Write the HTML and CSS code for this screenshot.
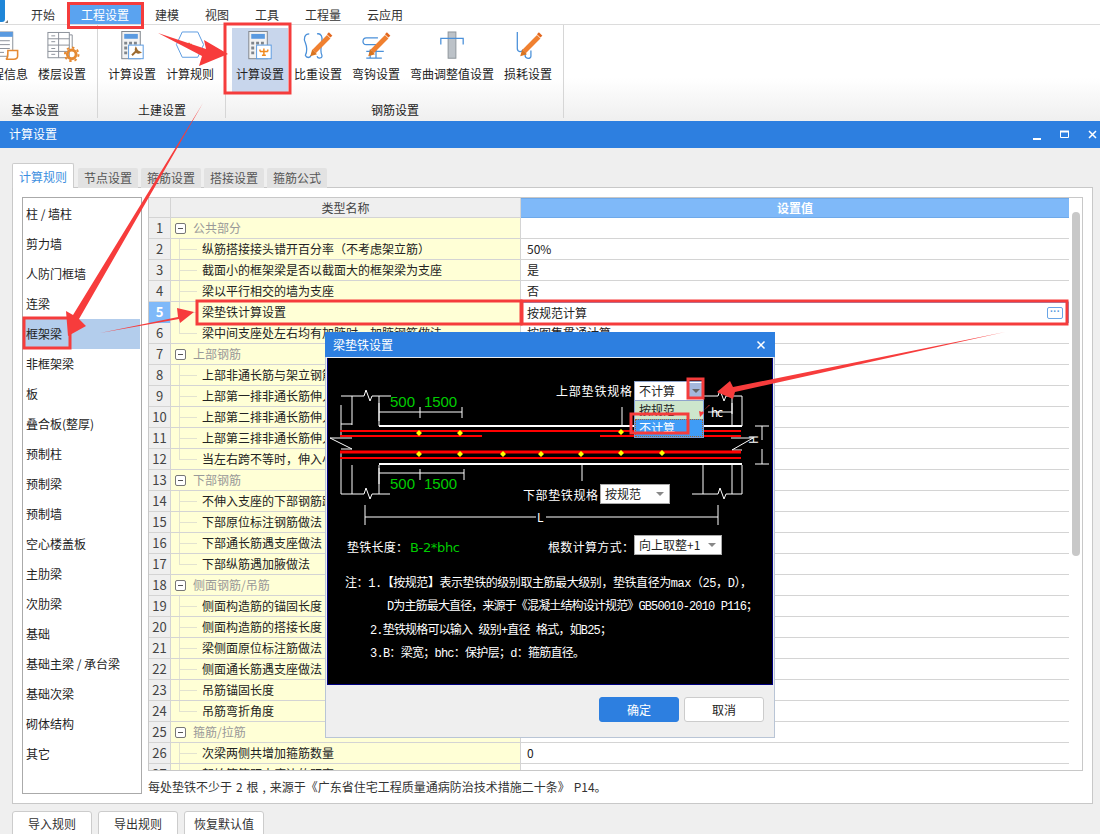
FILE: index.html
```html
<!DOCTYPE html>
<html lang="zh-CN">
<head>
<meta charset="utf-8">
<title>计算设置</title>
<link rel="stylesheet" href="styles.css">
</head>
<body>
<div class="app">
  <nav class="tabbar">
    <div class="logo"><svg width="18" height="24" viewBox="0 0 18 24"><rect x="-4" y="-2" width="9" height="24" rx="3" fill="#1f86d8"/><rect x="5" y="0" width="7" height="24" fill="#fff"/><path d="M5 23l3-3v3z" fill="#777"/></svg></div>
    <span class="tab">开始</span>
    <span class="tab tab-on">工程设置</span>
    <span class="tab">建模</span>
    <span class="tab">视图</span>
    <span class="tab">工具</span>
    <span class="tab">工程量</span>
    <span class="tab">云应用</span>
  </nav>
  <section class="ribbon">
    <div class="group g1">
      <div class="items items-cut">
        <div class="item"><svg class="ico" viewBox="0 0 36 36"><rect x="5" y="1" width="22" height="25" fill="#fff" stroke="#8a9099"/><rect x="5" y="1" width="22" height="5" fill="#5a9ae0"/><path d="M8 10h16M8 14h16M8 18h16M8 22h10" stroke="#8a9099"/><path d="M22 20h10v6c0 3-3 3-4 3h-8c2-1 2-3 2-9z" fill="#fff" stroke="#e58a33" stroke-width="1.6"/></svg><span>工程信息</span></div>
        <div class="item"><svg class="ico" viewBox="0 0 36 36"><rect x="3.500" y="1.500" width="22" height="26" fill="#fff" stroke="#8a9099"/><path d="M3.500 8h22M3.500 14.500h22M3.500 21h22M14.500 1.500v26M7 5h4M7 11h4M7 18h4M7 24h4" stroke="#8a9099"/><path d="M25.500 4h3v13" fill="none" stroke="#8a9099"/><circle cx="28" cy="24" r="4.500" fill="none" stroke="#e58a33" stroke-width="3"/><circle cx="28" cy="24" r="7" fill="none" stroke="#e58a33" stroke-width="2" stroke-dasharray="2.500 3"/></svg><span>楼层设置</span></div>
      </div>
      <div class="glabel">基本设置</div>
    </div>
    <div class="group g2">
      <div class="items">
        <div class="item"><svg class="ico" viewBox="0 0 36 36"><rect x="7.500" y="0.500" width="19" height="28" fill="#f2f2f2" stroke="#7f858c"/><rect x="10" y="3" width="14" height="5" fill="#5a9ae0"/><path d="M10 11h3v3h-3zM15 11h3v3h-3zM20 11h3v3h-3zM10 16h3v3h-3zM10 21h3v3h-3z" fill="#7f858c"/><rect x="14.500" y="14.500" width="15" height="14" fill="#fff" stroke="#5a9ae0"/><path d="M18 25l5-5M22 18a3 3 0 0 0 4 4l-2-1-1-1z" stroke="#9c6a2e" stroke-width="2" fill="#9c6a2e"/></svg><span>计算设置</span></div>
        <div class="item"><svg class="ico" viewBox="0 0 36 36"><path d="M10 1h16l6 13-6 13H10L4 14z" fill="#fff" stroke="#5a9ae0"/><path d="M15 14h5M17 12v5" stroke="#e58a33" stroke-width="2"/></svg><span>计算规则</span></div>
      </div>
      <div class="glabel">土建设置</div>
    </div>
    <div class="group g3">
      <div class="items">
        <div class="item item-on"><svg class="ico" viewBox="0 0 36 36"><rect x="6.500" y="0.500" width="19" height="28" fill="#f2f2f2" stroke="#7f858c"/><rect x="9" y="3" width="14" height="5" fill="#5a9ae0"/><path d="M9 11h3v3H9zM14 11h3v3h-3zM19 11h3v3h-3zM9 16h3v3H9zM9 21h3v3H9z" fill="#7f858c"/><rect x="14.500" y="14.500" width="15" height="14" fill="#fff" stroke="#5a9ae0"/><path d="M22 18v7M18 21h8M18 19v2M26 19v2M20 25h4" stroke="#f08a20" stroke-width="1.500" fill="none"/></svg><span>计算设置</span></div>
        <div class="item"><svg class="ico" viewBox="0 0 36 36"><path d="M9 3C4 3 3 8 5 12c2 5 2 9 0 13 1 3 5 3 6 0M17 3c4-1 6 3 5 8-1 5-2 10 0 14 1 3-4 4-5 1" fill="none" stroke="#4a90d9" stroke-width="1.300"/><path d="M14 21L29 6" stroke="#f08030" stroke-width="5"/><path d="M10 26l2-7 5 5z" fill="#d9741f"/><path d="M29 5l2-2" stroke="#e2661c" stroke-width="5"/></svg><span>比重设置</span></div>
        <div class="item"><svg class="ico" viewBox="0 0 36 36"><path d="M20 7H8C4 7 3 14 8 14h10M8 21h18M12 19v9M18 19v9M8 28h16" fill="none" stroke="#4a90d9" stroke-width="1.300"/><path d="M14 21L29 6" stroke="#f08030" stroke-width="5"/><path d="M10 26l2-7 5 5z" fill="#d9741f"/><path d="M29 5l2-2" stroke="#e2661c" stroke-width="5"/></svg><span>弯钩设置</span></div>
        <div class="item item-wide"><svg class="ico" viewBox="0 0 36 36"><rect x="14" y="1" width="8" height="27" fill="#bcc2c8" stroke="#8d949a"/><path d="M6.500 14V7.500h23V14" fill="none" stroke="#4a90d9" stroke-width="1.300"/></svg><span>弯曲调整值设置</span></div>
        <div class="item"><svg class="ico" viewBox="0 0 36 36"><path d="M7 1v17c0 4 5 4 6 1M15 18v7c0 4 6 4 6 1V20" fill="none" stroke="#4a90d9" stroke-width="1.300"/><path d="M14 21L29 6" stroke="#f08030" stroke-width="5"/><path d="M10 26l2-7 5 5z" fill="#d9741f"/><path d="M29 5l2-2" stroke="#e2661c" stroke-width="5"/></svg><span>损耗设置</span></div>
      </div>
      <div class="glabel">钢筋设置</div>
    </div>
  </section>

  <section class="window">
    <header class="wtitle">
      <span>计算设置</span>
      <div class="wctrl">
        <svg width="12" height="12" viewBox="0 0 12 12"><path d="M3 10h8" stroke="#fff" stroke-width="2"/></svg>
        <svg width="12" height="12" viewBox="0 0 12 12"><path d="M2.500 2.500h8v6h-8z" fill="none" stroke="#fff"/><path d="M2 2.500h9" stroke="#fff" stroke-width="2"/></svg>
        <svg width="12" height="12" viewBox="0 0 12 12"><path d="M3 2l7 7M10 2l-7 7" stroke="#fff" stroke-width="1.500"/></svg>
      </div>
    </header>
    <div class="wbody">
      <div class="ptabs">
        <span class="ptab ptab-on">计算规则</span>
        <span class="ptab">节点设置</span>
        <span class="ptab">箍筋设置</span>
        <span class="ptab">搭接设置</span>
        <span class="ptab">箍筋公式</span>
      </div>
      <div class="panel">
        <ul class="list">
          <li>柱 / 墙柱</li><li>剪力墙</li><li>人防门框墙</li><li>连梁</li><li class="on">框架梁</li><li>非框架梁</li><li>板</li><li>叠合板(整厚)</li><li>预制柱</li><li>预制梁</li><li>预制墙</li><li>空心楼盖板</li><li>主肋梁</li><li>次肋梁</li><li>基础</li><li>基础主梁 / 承台梁</li><li>基础次梁</li><li>砌体结构</li><li>其它</li>
        </ul>
        <div class="right">
          <div class="frame">
            <div class="grid">
              <div class="row head"><div class="n"></div><div class="c">类型名称</div><div class="v">设置值</div></div>
              <div class="row grp"><div class="n">1</div><div class="c"><i class="minus"></i>公共部分</div><div class="v"></div></div>
              <div class="row"><div class="n">2</div><div class="c">纵筋搭接接头错开百分率（不考虑架立筋）</div><div class="v">50%</div></div>
              <div class="row"><div class="n">3</div><div class="c">截面小的框架梁是否以截面大的框架梁为支座</div><div class="v">是</div></div>
              <div class="row"><div class="n">4</div><div class="c">梁以平行相交的墙为支座</div><div class="v">否</div></div>
              <div class="row cur"><div class="n">5</div><div class="c">梁垫铁计算设置</div><div class="v"><span>按规范计算</span><b class="more">···</b></div></div>
              <div class="row last"><div class="n">6</div><div class="c">梁中间支座处左右均有加腋时，加腋钢筋做法</div><div class="v">按图集贯通计算</div></div>
              <div class="row grp"><div class="n">7</div><div class="c"><i class="minus"></i>上部钢筋</div><div class="v"></div></div>
              <div class="row"><div class="n">8</div><div class="c">上部非通长筋与架立钢筋的搭接长度</div><div class="v"></div></div>
              <div class="row"><div class="n">9</div><div class="c">上部第一排非通长筋伸入跨内的长度</div><div class="v"></div></div>
              <div class="row"><div class="n">10</div><div class="c">上部第二排非通长筋伸入跨内的长度</div><div class="v"></div></div>
              <div class="row"><div class="n">11</div><div class="c">上部第三排非通长筋伸入跨内的长度</div><div class="v"></div></div>
              <div class="row last"><div class="n">12</div><div class="c">当左右跨不等时，伸入小跨内的长度</div><div class="v"></div></div>
              <div class="row grp"><div class="n">13</div><div class="c"><i class="minus"></i>下部钢筋</div><div class="v"></div></div>
              <div class="row"><div class="n">14</div><div class="c">不伸入支座的下部钢筋距支座边的距离</div><div class="v"></div></div>
              <div class="row"><div class="n">15</div><div class="c">下部原位标注钢筋做法</div><div class="v"></div></div>
              <div class="row"><div class="n">16</div><div class="c">下部通长筋遇支座做法</div><div class="v"></div></div>
              <div class="row last"><div class="n">17</div><div class="c">下部纵筋遇加腋做法</div><div class="v"></div></div>
              <div class="row grp"><div class="n">18</div><div class="c"><i class="minus"></i>侧面钢筋/吊筋</div><div class="v"></div></div>
              <div class="row"><div class="n">19</div><div class="c">侧面构造筋的锚固长度</div><div class="v"></div></div>
              <div class="row"><div class="n">20</div><div class="c">侧面构造筋的搭接长度</div><div class="v"></div></div>
              <div class="row"><div class="n">21</div><div class="c">梁侧面原位标注筋做法</div><div class="v"></div></div>
              <div class="row"><div class="n">22</div><div class="c">侧面通长筋遇支座做法</div><div class="v"></div></div>
              <div class="row"><div class="n">23</div><div class="c">吊筋锚固长度</div><div class="v"></div></div>
              <div class="row last"><div class="n">24</div><div class="c">吊筋弯折角度</div><div class="v"></div></div>
              <div class="row grp"><div class="n">25</div><div class="c"><i class="minus"></i>箍筋/拉筋</div><div class="v"></div></div>
              <div class="row"><div class="n">26</div><div class="c">次梁两侧共增加箍筋数量</div><div class="v">0</div></div>
              <div class="row"><div class="n">27</div><div class="c">起始箍筋距支座边的距离</div><div class="v">50</div></div>
            </div>
            <div class="sbar"><div class="thumb"></div></div>
          </div>
          <p class="note">每处垫铁不少于 2 根 , 来源于《广东省住宅工程质量通病防治技术措施二十条》 P14。</p>
        </div>
      </div>
      <div class="actions">
        <button class="btn">导入规则</button>
        <button class="btn">导出规则</button>
        <button class="btn">恢复默认值</button>
      </div>
    </div>
  </section>

  <div class="dialog">
    <header class="dtitle"><span>梁垫铁设置</span><svg width="10" height="10" viewBox="0 0 10 10"><path d="M1.500 1.500l7 7M8.500 1.500l-7 7" stroke="#fff" stroke-width="1.500"/></svg></header>
    <div class="canvas">
      <svg class="draw" width="444" height="325" viewBox="328 358 444 325">
        <g class="w" fill="none">
          <path d="M341 396h23l2-6 4 11 2-5h19M352 396v29M341 424h11M341 405v32M379 396v30"/>
          <path d="M341 494h23l2-6 4 11 2-5h18M352 465v29M341 453v41M379 465v29"/>
          <path d="M352 438h-22l22 11h-11"/>
          <path d="M704 396h14l2-6 4 11 2-5h16M742 396v30M732 396v30"/>
          <path d="M692 494h26l2-6 4 11 2-5h16M703 465v29M732 465v29M742 465v29"/>
          <path d="M731 438h22l-21 12h10"/>
          <path d="M622 407v19M582 464v17"/>
          <path d="M379 412h83M379 403v18M420 407v11M462 407v11"/>
          <path d="M379 473h85M379 468v16M420 469v11M464 469v11"/>
          <path d="M365 517h171M546 517h172M365 505v20M718 505v20"/>
          <path d="M708 412h24M732 403v11"/>
          <path d="M762 426v14M762 449v15M755 426h14M755 464h14"/>
        </g>
        <path class="beam" d="M379 426h363M379 464h363"/>
        <path class="rebar thin" d="M340 431h401M340 436h142M600 436h141M340 458h401"/>
        <path class="rebar" d="M340 452h401"/>
        <g class="dots"><path d="M419 430l3 3-3 3-3-3zM460 430l3 3-3 3-3-3zM621 429l3 3-3 3-3-3zM419 451l3 3-3 3-3-3zM460 451l3 3-3 3-3-3zM503 451l3 3-3 3-3-3zM541 451l3 3-3 3-3-3zM581 451l3 3-3 3-3-3zM621 450l3 3-3 3-3-3zM662 450l3 3-3 3-3-3z"/></g>
        <g class="gt">
          <text x="390" y="407" textLength="25">500</text>
          <text x="424" y="407" textLength="33">1500</text>
          <text x="390" y="489" textLength="25">500</text>
          <text x="424" y="489" textLength="33">1500</text>
        </g>
        <g class="wt">
          <text x="711" y="417" textLength="12">hc</text>
          <text x="537" y="522" textLength="8">L</text>
          <text x="0" y="0" transform="translate(758 444) rotate(-90)" textLength="8">H</text>
          <text x="556" y="396" textLength="76">上部垫铁规格</text>
          <text x="523" y="500" textLength="75">下部垫铁规格</text>
          <text x="347" y="552" textLength="61">垫铁长度：</text>
          <text x="548" y="552" textLength="86">根数计算方式：</text>
        </g>
        <text class="gs" x="410" y="552" textLength="50">B-2*bhc</text>
        <g class="mono">
          <text x="345" y="587" textLength="407">注：1.【按规范】表示垫铁的级别取主筋最大级别，垫铁直径为max（25，D），</text>
          <text x="387" y="610" textLength="371">D为主筋最大直径，来源于《混凝土结构设计规范》GB50010-2010 P116；</text>
          <text x="370" y="634" textLength="242">2.垫铁规格可以输入 级别+直径 格式，如B25；</text>
          <text x="370" y="657" textLength="215">3.B：梁宽；bhc：保护层；d：箍筋直径。</text>
        </g>
      </svg>
      <div class="sel sel-a"><span>不计算</span><i class="arrow-on"><i class="arrow"></i></i></div>
      <div class="drop"><div class="opt">按规范</div><div class="opt opt-on">不计算</div></div>
      <div class="sel sel-b"><span>按规范</span><i class="arrow"></i></div>
      <div class="sel sel-c"><span>向上取整+1</span><i class="arrow"></i></div>
    </div>
    <footer class="dfoot">
      <button class="dbtn dbtn-ok">确定</button>
      <button class="dbtn">取消</button>
    </footer>
  </div>

  <svg class="marks" width="1100" height="834" viewBox="0 0 1100 834">
    <defs>
      <linearGradient id="fade4" gradientUnits="userSpaceOnUse" x1="1005" y1="332" x2="880" y2="360"><stop offset="0" stop-color="#f73c3c" stop-opacity="0"/><stop offset="1" stop-color="#f73c3c"/></linearGradient>
    </defs>
    <g class="box">
      <rect x="68.500" y="3.500" width="74" height="24"/>
      <rect x="225" y="24" width="65" height="69"/>
      <rect x="24" y="318" width="46" height="30"/>
      <rect x="197" y="301" width="324" height="23"/>
      <rect x="522" y="301" width="545" height="23"/>
      <rect x="688" y="379" width="15" height="19"/>
      <rect x="631" y="414" width="57" height="19"/>
    </g>
    <g class="arr">
      <path d="M158 33l48 16-2-9 24 14-29 12 3-10z"/>
      <path d="M203 103L79 319l7 7-18 10-2-25 7 4z"/>
      <path d="M100 333l78-16-1-9 17 4-14 11-1-4z"/>
      <path d="M1005 332L735 392l-2 7-16-7 13-11 3 6z" fill="url(#fade4)"/>
      <path d="M710 405l-7 6 1 2-4 4-1-6 3 1 7-7z"/>
    </g>
  </svg>
</div>
</body>
</html>
```
FILE: styles.css
```css
* { box-sizing: border-box; }
html, body { margin: 0; padding: 0; background: #fff; }
body { font: 12px/16px "Noto Sans CJK SC", "Liberation Sans", sans-serif; color: #222; }
.app { position: relative; width: 1100px; height: 834px; overflow: hidden; }

/* tab strip */
.tabbar { display: flex; height: 25px; border-bottom: 1px solid #dcdcdc; background: #fff; }
.logo { width: 18px; height: 24px; }
.logo svg { display: block; }
.tab { padding: 0 13px; height: 24px; line-height: 30px; color: #333; white-space: nowrap; }
.tab-on { background: #5aa3f0; color: #fff; margin-top: 3px; height: 21px; line-height: 24px; }

/* ribbon */
.ribbon { display: flex; height: 96px; background: linear-gradient(#fff 55%, #efefef); }
.group { display: flex; flex-direction: column; border-right: 1px solid #d6d6d6; overflow: hidden; margin-bottom: 3px; }
.g1 { width: 98px; }
.g2 { width: 128px; padding-left: 10px; }
.g3 { width: 338px; padding-left: 10px; }
.items { display: flex; gap: 10px; padding-top: 6px; flex: 1; }
.items-cut { margin-left: -10px; }
.items-cut .item:first-child { margin-left: -10px; }
.item { width: 48px; display: flex; flex-direction: column; align-items: center; height: 66px; white-space: nowrap; }
.item-wide { width: 84px; }
.item-on { margin-top: -3px; padding-top: 3px; background: #c8d6ec; box-shadow: 4px 0 0 #c8d6ec, -4px 0 0 #c8d6ec; }
.ico { width: 36px; height: 35px; display: block; flex: none; }
.glabel { text-align: center; line-height: 16px; height: 16px; color: #222; margin-left: -10px; }
.g1 .glabel { margin-left: 0; width: 70px; }
.g3 .glabel { width: 338px; }
.g2 .glabel { width: 128px; }

/* settings window */
.window { height: 713px; background: #efefef; }
.wtitle { display: flex; justify-content: space-between; align-items: center; height: 27px; padding: 0 2px 2px 9px; background: #2d7fe0; color: #fff; }
.wctrl { display: flex; gap: 16px; padding-top: 2px; }
.wctrl svg { display: block; }
.wbody { padding: 15px 7px 0 12px; }
.ptabs { display: flex; gap: 3px; height: 25px; align-items: flex-end; margin-bottom: -1px; position: relative; }
.ptab { width: 60px; height: 20px; line-height: 20px; text-align: center; background: #e2e2e2; color: #555; border-radius: 2px 2px 0 0; }
.ptab-on { width: 62px; height: 25px; line-height: 25px; background: #fff; color: #3d8fe0; border: 1px solid #ccc; border-bottom: 0; margin-right: 1px; }
.panel { display: flex; gap: 6px; height: 617px; padding: 9px; background: #fff; border: 1px solid #c8c8c8; }
.list { list-style: none; margin: 0; padding: 1px 1px 0 0; width: 120px; border: 1px solid #aaa; flex: none; }
.list li { height: 30px; line-height: 29px; padding-left: 3px; white-space: nowrap; }
.list .on { background: #b3cdec; }
.right { flex: 1; min-width: 0; display: flex; flex-direction: column; }
.frame { display: flex; height: 574px; border: 1px solid #c8c8c8; overflow: hidden; }
.grid { width: 920px; flex: none; }
.sbar { flex: 1; padding: 14px 3px 0 3px; }
.thumb { height: 344px; width: 8px; background: #c8c8c8; border-radius: 4px; }
.row { display: grid; grid-template-columns: 22px 350px 548px; height: 21px; line-height: 20px; }
.n { background: #efefef; border-bottom: 1px solid #d4d4d4; border-right: 1px solid #d4d4d4; text-align: center; font-size: 13px; color: #444; }
.c { padding-left: 31px; white-space: nowrap; overflow: hidden; border-bottom: 1px solid #d4d4d4; border-right: 1px solid #d4d4d4;
  background:
    linear-gradient(#e2e2d0, #e2e2d0) 8px 10px / 18px 1px no-repeat,
    linear-gradient(#e2e2d0, #e2e2d0) 8px 0 / 1px 100% no-repeat,
    #ffffd6; }
.last .c { background:
    linear-gradient(#e2e2d0, #e2e2d0) 8px 10px / 18px 1px no-repeat,
    linear-gradient(#e2e2d0, #e2e2d0) 8px 0 / 1px 11px no-repeat,
    #ffffd6; }
.v { padding-left: 6px; border-bottom: 1px solid #d4d4d4; background: #fff; white-space: nowrap; }
.head { height: 20px; }
.head .n { background: #efefef; }
.head .c { padding: 0; text-align: center; background: #efefef; color: #444; }
.head .v { padding: 0; text-align: center; background: #7fb9f9; color: #fff; font-weight: 700; border-bottom: 1px solid #6ea9ea; border-top: 1px solid #6ea9ea; line-height: 18px; }
.grp .c { padding-left: 4px; color: #999; display: flex; align-items: center; gap: 7px; background: #ffffd6; }
.minus { width: 11px; height: 11px; border: 1px solid #777; border-radius: 2px; background: linear-gradient(#555, #555) center / 5px 1px no-repeat, #fff; flex: none; }
.cur .n { background: #7fb9f9; color: #fff; font-weight: 700; }
.cur .v { display: flex; justify-content: space-between; align-items: center; padding-right: 5px; border: 1px solid #7f9fd8; padding-left: 5px; }
.more { width: 16px; height: 12px; border: 1px solid #6aa5e6; border-radius: 2px; color: #5b9be0; line-height: 8px; text-align: center; font-size: 10px; font-family: "Liberation Sans", sans-serif; }
.note { margin: 0; height: 23px; line-height: 32px; white-space: nowrap; color: #333; word-spacing: 1.25px; }
.actions { display: flex; gap: 6px; margin-top: 7px; }
.btn { width: 80px; height: 26px; font: inherit; color: #333; background: #fff; border: 1px solid #ccc; border-radius: 3px 3px 0 0; padding: 0; }

/* modal */
.dialog { position: absolute; left: 325px; top: 332px; width: 450px; height: 406px; background: #efefef; border: 1px solid #b9c5d6; border-top: 0; }
.dtitle { display: flex; justify-content: space-between; align-items: center; height: 25px; margin: 0 -1px; padding: 0 9px 0 8px; background: #2d7fe0; color: #fff; }
.dtitle svg { display: block; }
.canvas { position: relative; margin: 0 1px; width: 446px; height: 327px; background: #000; border: 1px solid #000080; border-top: 0; }
.draw { display: block; margin-top: 1px; }
.w path { stroke: #fff; stroke-width: 1; }
.beam { stroke: #fff; stroke-width: 2; fill: none; }
.rebar { stroke: #f00; stroke-width: 3; fill: none; }
.rebar.thin { stroke-width: 2; }
.dots { fill: #ff0; }
.gt text { fill: #0c0; font: 15px "Liberation Sans", sans-serif; }
.wt text { fill: #fff; font: 12px "Noto Sans CJK SC", sans-serif; }
.gs { fill: #0c0; font: 13px "DejaVu Sans", sans-serif; }
.mono text { fill: #fff; font: 12px "Liberation Mono", "Noto Sans CJK SC", monospace; }
.sel { position: absolute; display: flex; justify-content: space-between; align-items: center; height: 20px; background: #fff; color: #222; padding: 0 3px 0 4px; border: 1px solid #aaa; }
.sel-a { left: 306px; top: 23px; width: 70px; border-color: #8fa4cc; padding-right: 1px; }
.sel-b { left: 272px; top: 126px; width: 70px; }
.sel-c { left: 306px; top: 177px; width: 88px; }
.arrow { width: 0; height: 0; border: 4px solid transparent; border-top-color: #888; border-bottom: 0; margin-right: 2px; }
.arrow-on { display: flex; align-items: center; justify-content: center; width: 13px; height: 16px; background: #a4b8dc; }
.arrow-on .arrow { margin: 0; border-top-color: #666; }
.drop { position: absolute; left: 306px; top: 43px; width: 70px; border: 1px solid #7f9fd8; border-top: 0; }
.opt { height: 18px; line-height: 18px; padding-left: 4px; background: #cde6cc; color: #222; }
.opt-on { background: #3f9cf6; color: #fff; outline: 1px dotted #a8662c; outline-offset: -1px; }
.dfoot { display: flex; justify-content: flex-end; gap: 5px; padding: 12px 10px 0 0; }
.dbtn { width: 80px; height: 25px; font: inherit; color: #222; background: #fff; border: 1px solid #ccc; border-radius: 3px; padding: 0; }
.dbtn-ok { background: #2d7fe0; border-color: #2d7fe0; color: #fff; }

/* red annotations */
.marks { position: absolute; left: 0; top: 0; pointer-events: none; }
.box rect { fill: none; stroke: #f53c3c; stroke-width: 3; }
.arr path { fill: #f73c3c; }
```
